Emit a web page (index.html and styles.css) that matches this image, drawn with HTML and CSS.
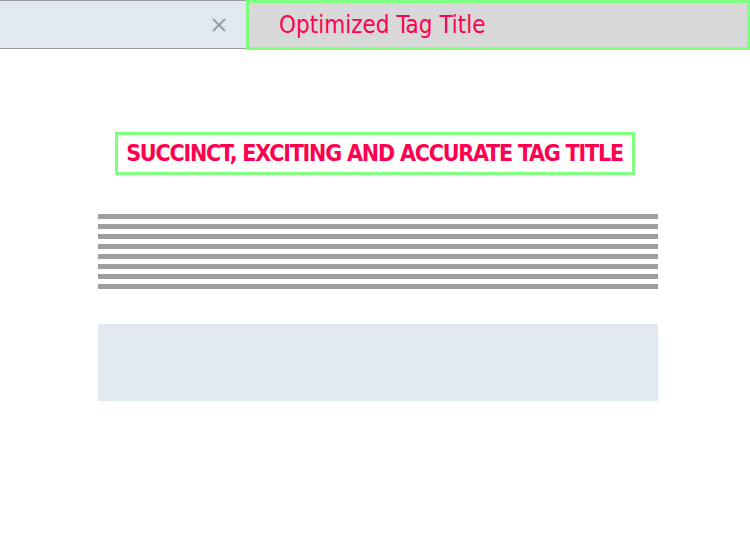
FILE: index.html
```html
<!DOCTYPE html>
<html>
<head>
<meta charset="utf-8">
<link rel="stylesheet" href="styles.css">
</head>
<body>
<div class="tabs">
  <div class="tab-plain">
    <svg class="close" width="16" height="16" viewBox="0 0 16 16"><path d="M2 2 L14 14 M14 2 L2 14" stroke="#9a9a9a" stroke-width="1.8" fill="none"/></svg>
  </div>
  <div class="tab-active">Optimized Tag Title</div>
</div>
<main class="content">
  <h1 class="headline">SUCCINCT, EXCITING AND ACCURATE TAG TITLE</h1>
  <div class="lines">
    <div class="line"></div><div class="line"></div><div class="line"></div><div class="line"></div>
    <div class="line"></div><div class="line"></div><div class="line"></div><div class="line"></div>
  </div>
  <div class="panel"></div>
</main>
</body>
</html>
```
FILE: styles.css
```css
html, body { margin: 0; padding: 0; background: #fff; }
body { font-family: "DejaVu Sans Condensed", "DejaVu Sans", sans-serif; font-stretch: condensed; }
.tabs { display: flex; height: 50px; }
.tab-plain {
  width: 246px; height: 49px; box-sizing: border-box;
  background: #e2e8f0; border-top: 1px solid #9a9a9a; border-bottom: 1px solid #9a9a9a;
  display: flex; align-items: center; justify-content: flex-end; padding-right: 19px;
}
.close { display: block; }
.tab-active {
  flex: 1; box-sizing: border-box; height: 50px;
  background: #d8d8d8; border: 3px solid #80ff80;
  color: #ff0050; font-size: 24px; padding-left: 30px;
  display: flex; align-items: center;
}
.content { padding-top: 82px; }
.headline {
  width: fit-content; margin: 0 auto; box-sizing: border-box;
  border: 3px solid #80ff80; color: #ff0050;
  font-size: 23px; font-weight: bold; letter-spacing: -1.2px;
  padding: 4px 9px 4px 8px; line-height: 29px;
}
.lines { width: 560px; margin: 39px 0 0 98px; display: flex; flex-direction: column; gap: 5px; }
.line { height: 5px; background: #9e9e9e; }
.panel { width: 560px; height: 77px; background: #e2e8f0; margin: 35px 0 0 98px; }
```
